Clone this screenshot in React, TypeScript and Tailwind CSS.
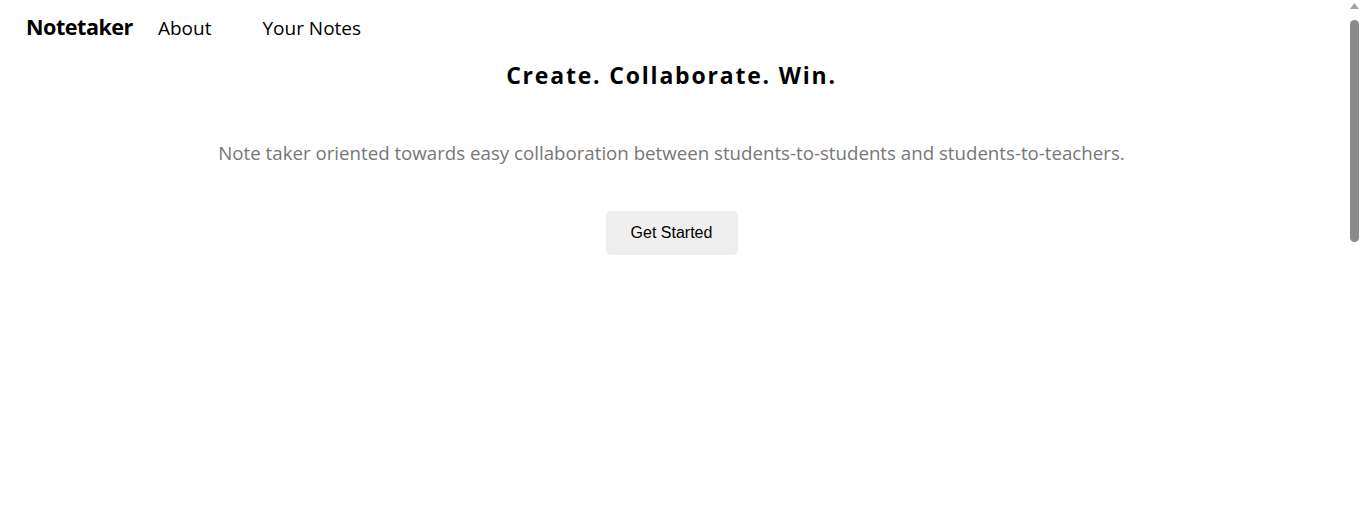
function FakeScrollbar() {
  return (
    <div aria-hidden className="fixed top-0 right-0 h-screen w-[15px] bg-white flex flex-col items-center">
      <svg width="9" height="6" viewBox="0 0 9 6" className="mt-[3px]">
        <path d="M4.5 0 L9 6 L0 6 Z" fill="#a3a3a3" />
      </svg>
      <div className="mt-[11px] w-[9px] h-[222px] rounded-full bg-[#8a8a8a]" />
    </div>
  );
}

export default function App() {
  return (
    <div className="h-screen overflow-y-scroll bg-white font-['Open_Sans',sans-serif] text-black">
      <div className="min-h-[1217px] pr-[19px]">
        <nav className="flex items-center h-[56px] px-[26px]">
          <span className="text-[21.6px] font-bold tracking-[-0.5px] leading-none mb-[2px]">Notetaker</span>
          <a className="ml-[25px] text-[19px]">About</a>
          <a className="ml-[51px] text-[19px]">Your Notes</a>
        </nav>
        <main className="flex flex-col items-center">
          <h1 className="mt-[2px] text-[23px] font-bold tracking-[1.8px]">Create. Collaborate. Win.</h1>
          <p className="mt-[46px] text-[18.7px] text-[#777777]">
            Note taker oriented towards easy collaboration between students-to-students and students-to-teachers.
          </p>
          <button className="mt-[44px] w-[132px] h-[44px] rounded-[5px] bg-[#efefef] font-['Liberation_Sans',sans-serif] text-[16px] text-black">
            Get Started
          </button>
        </main>
      </div>
      <FakeScrollbar />
    </div>
  );
}
